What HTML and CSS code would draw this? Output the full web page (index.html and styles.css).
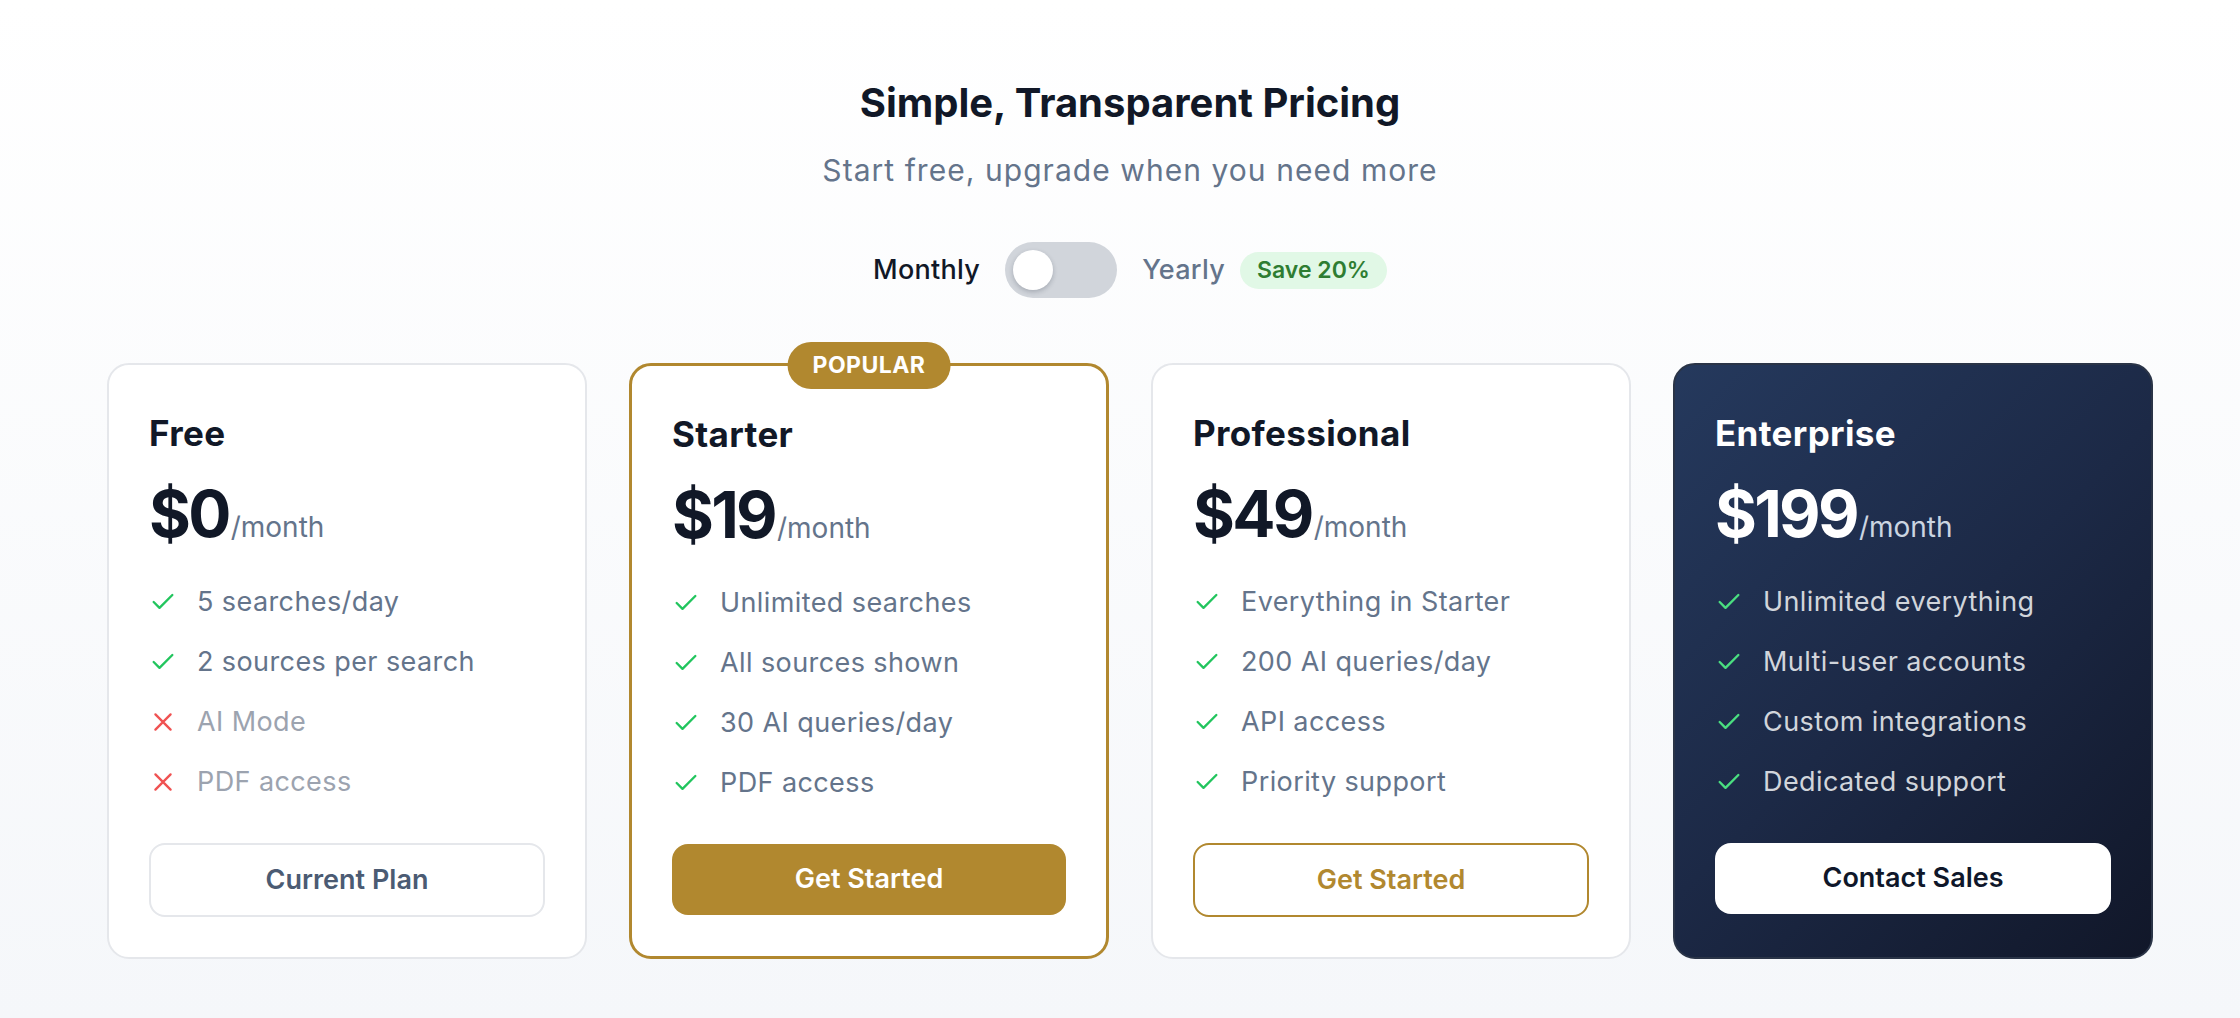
FILE: index.html
```html
<!DOCTYPE html>
<html lang="en">
<head>
<meta charset="utf-8">
<title>Pricing</title>
<link rel="stylesheet" href="styles.css">
</head>
<body>
<main class="pricing">
  <header class="intro">
    <h1 class="title">Simple, Transparent Pricing</h1>
    <p class="subtitle">Start free, upgrade when you need more</p>
    <div class="billing">
      <span class="billing-label is-active">Monthly</span>
      <span class="switch" role="switch" aria-checked="false"><span class="switch-knob"></span></span>
      <span class="billing-yearly">
        <span class="billing-label">Yearly</span>
        <span class="save-pill">Save 20%</span>
      </span>
    </div>
  </header>

  <section class="plans">
    <article class="plan">
      <h2 class="plan-name">Free</h2>
      <div class="plan-price"><span class="amount">$0</span><span class="period">/month</span></div>
      <ul class="features">
        <li class="feature"><svg class="icon icon-yes" viewBox="0 0 24 24"><path d="M20 6 9 17l-5-5"/></svg><span>5 searches/day</span></li>
        <li class="feature"><svg class="icon icon-yes" viewBox="0 0 24 24"><path d="M20 6 9 17l-5-5"/></svg><span>2 sources per search</span></li>
        <li class="feature is-off"><svg class="icon icon-no" viewBox="0 0 24 24"><path d="M18.5 5.5 5.5 18.5M5.5 5.5l13 13"/></svg><span>AI Mode</span></li>
        <li class="feature is-off"><svg class="icon icon-no" viewBox="0 0 24 24"><path d="M18.5 5.5 5.5 18.5M5.5 5.5l13 13"/></svg><span>PDF access</span></li>
      </ul>
      <button class="plan-btn btn-muted" type="button">Current Plan</button>
    </article>

    <article class="plan plan-popular">
      <span class="badge">POPULAR</span>
      <h2 class="plan-name">Starter</h2>
      <div class="plan-price"><span class="amount">$19</span><span class="period">/month</span></div>
      <ul class="features">
        <li class="feature"><svg class="icon icon-yes" viewBox="0 0 24 24"><path d="M20 6 9 17l-5-5"/></svg><span>Unlimited searches</span></li>
        <li class="feature"><svg class="icon icon-yes" viewBox="0 0 24 24"><path d="M20 6 9 17l-5-5"/></svg><span>All sources shown</span></li>
        <li class="feature"><svg class="icon icon-yes" viewBox="0 0 24 24"><path d="M20 6 9 17l-5-5"/></svg><span>30 AI queries/day</span></li>
        <li class="feature"><svg class="icon icon-yes" viewBox="0 0 24 24"><path d="M20 6 9 17l-5-5"/></svg><span>PDF access</span></li>
      </ul>
      <button class="plan-btn btn-gold" type="button">Get Started</button>
    </article>

    <article class="plan">
      <h2 class="plan-name">Professional</h2>
      <div class="plan-price"><span class="amount">$49</span><span class="period">/month</span></div>
      <ul class="features">
        <li class="feature"><svg class="icon icon-yes" viewBox="0 0 24 24"><path d="M20 6 9 17l-5-5"/></svg><span>Everything in Starter</span></li>
        <li class="feature"><svg class="icon icon-yes" viewBox="0 0 24 24"><path d="M20 6 9 17l-5-5"/></svg><span>200 AI queries/day</span></li>
        <li class="feature"><svg class="icon icon-yes" viewBox="0 0 24 24"><path d="M20 6 9 17l-5-5"/></svg><span>API access</span></li>
        <li class="feature"><svg class="icon icon-yes" viewBox="0 0 24 24"><path d="M20 6 9 17l-5-5"/></svg><span>Priority support</span></li>
      </ul>
      <button class="plan-btn btn-outline" type="button">Get Started</button>
    </article>

    <article class="plan plan-dark">
      <h2 class="plan-name">Enterprise</h2>
      <div class="plan-price"><span class="amount">$199</span><span class="period">/month</span></div>
      <ul class="features">
        <li class="feature"><svg class="icon icon-yes" viewBox="0 0 24 24"><path d="M20 6 9 17l-5-5"/></svg><span>Unlimited everything</span></li>
        <li class="feature"><svg class="icon icon-yes" viewBox="0 0 24 24"><path d="M20 6 9 17l-5-5"/></svg><span>Multi-user accounts</span></li>
        <li class="feature"><svg class="icon icon-yes" viewBox="0 0 24 24"><path d="M20 6 9 17l-5-5"/></svg><span>Custom integrations</span></li>
        <li class="feature"><svg class="icon icon-yes" viewBox="0 0 24 24"><path d="M20 6 9 17l-5-5"/></svg><span>Dedicated support</span></li>
      </ul>
      <button class="plan-btn btn-light" type="button">Contact Sales</button>
    </article>
  </section>
</main>
</body>
</html>
```

FILE: styles.css
```css
* {
  box-sizing: border-box;
}

html,
body {
  margin: 0;
}

body {
  min-height: 100vh;
  font-family: Inter, "Noto Sans", "Liberation Sans", sans-serif;
  color: #111827;
  background: linear-gradient(180deg, #ffffff 0%, #f5f7fa 100%);
}

.pricing {
  padding: 79px 0 60px 20px;
}

/* ---------- header ---------- */
.intro {
  display: flex;
  flex-direction: column;
  align-items: center;
}

.title {
  margin: 0;
  font-size: 40px;
  line-height: 48px;
  font-weight: 700;
  letter-spacing: 0;
  color: #111827;
}

.subtitle {
  margin: 22px 0 0;
  font-size: 30px;
  line-height: 42px;
  font-weight: 400;
  letter-spacing: 0.035em;
  color: #64748b;
}

.billing {
  display: flex;
  align-items: center;
  gap: 25px;
  margin-top: 51px;
}

.billing-yearly {
  display: flex;
  align-items: center;
  gap: 15px;
}

.billing-label {
  font-size: 27px;
  line-height: 40px;
  font-weight: 500;
  letter-spacing: 0.01em;
  color: #64748b;
}

.billing-label.is-active {
  color: #111827;
}

.switch {
  display: flex;
  align-items: center;
  width: 112px;
  height: 56px;
  padding: 0 8px;
  border-radius: 28px;
  background: #d1d5db;
}

.switch-knob {
  width: 40px;
  height: 40px;
  border-radius: 50%;
  background: #ffffff;
  box-shadow: 0 2px 5px rgba(15, 23, 42, 0.22);
}

.save-pill {
  display: inline-flex;
  align-items: center;
  height: 37px;
  padding: 0 17px;
  border-radius: 999px;
  background: #e1f8e6;
  color: #2e7d32;
  font-size: 23px;
  font-weight: 600;
}

/* ---------- plans ---------- */
.plans {
  display: grid;
  grid-template-columns: repeat(4, 480px);
  gap: 42px;
  justify-content: center;
  margin-top: 65px;
}

.plan {
  position: relative;
  display: flex;
  flex-direction: column;
  padding: 40px;
  border: 2px solid #e5e7eb;
  border-radius: 22px;
  background: #ffffff;
}

.plan-popular {
  border: 3px solid #b1882f;
}

.plan-dark {
  border: 2px solid #2a3447;
  background: linear-gradient(135deg, #25395d 0%, #1c2946 50%, #111729 100%);
}

.badge {
  position: absolute;
  top: -24px;
  left: 50%;
  transform: translateX(-50%);
  height: 47px;
  padding: 0 25px;
  border-radius: 999px;
  background: #b1882f;
  color: #ffffff;
  font-size: 23px;
  line-height: 47px;
  font-weight: 700;
  letter-spacing: 0.02em;
  white-space: nowrap;
}

.plan-name {
  margin: 0;
  font-size: 35px;
  line-height: 56px;
  font-weight: 700;
  letter-spacing: 0.01em;
  color: #111827;
}

.plan-price {
  display: flex;
  align-items: baseline;
  margin-top: 21px;
  height: 64px;
}

.amount {
  font-size: 64px;
  line-height: 64px;
  font-weight: 700;
  letter-spacing: -0.042em;
  color: #111827;
}

.period {
  margin-left: 2px;
  font-size: 28px;
  line-height: 28px;
  color: #64748b;
}

.features {
  display: flex;
  flex-direction: column;
  gap: 19.5px;
  margin: 36px 0 0;
  padding: 0;
  list-style: none;
}

.feature {
  display: flex;
  align-items: center;
  gap: 20px;
  font-size: 27px;
  line-height: 40.5px;
  letter-spacing: 0.015em;
  color: #64748b;
}

.feature.is-off {
  color: #9ca3af;
}

.icon {
  flex-shrink: 0;
  width: 28px;
  height: 28px;
  fill: none;
  stroke-width: 2;
  stroke-linecap: round;
  stroke-linejoin: round;
}

.icon-yes {
  stroke: #22c55e;
}

.icon-no {
  stroke: #f05252;
}

.plan-btn {
  display: block;
  width: 100%;
  margin-top: 40px;
  padding: 16.5px;
  border: none;
  border-radius: 16px;
  font-family: inherit;
  font-size: 27px;
  line-height: 38px;
  font-weight: 600;
  text-align: center;
  cursor: pointer;
}

.btn-muted {
  padding: 16px;
  border: 2px solid #e5e7eb;
  background: #ffffff;
  color: #4b5b73;
}

.btn-gold {
  background: #b1882f;
  color: #ffffff;
}

.btn-outline {
  padding: 16px;
  border: 2px solid #b1882f;
  background: #ffffff;
  color: #b1882f;
}

.btn-light {
  background: #ffffff;
  color: #0f172a;
}

/* dark card text */
.plan-dark .plan-name,
.plan-dark .amount {
  color: #ffffff;
}

.plan-dark .period {
  color: #cbd5e1;
}

.plan-dark .feature {
  color: #d1d5db;
}

.plan-dark .icon-yes {
  stroke: #4ade80;
}
```
